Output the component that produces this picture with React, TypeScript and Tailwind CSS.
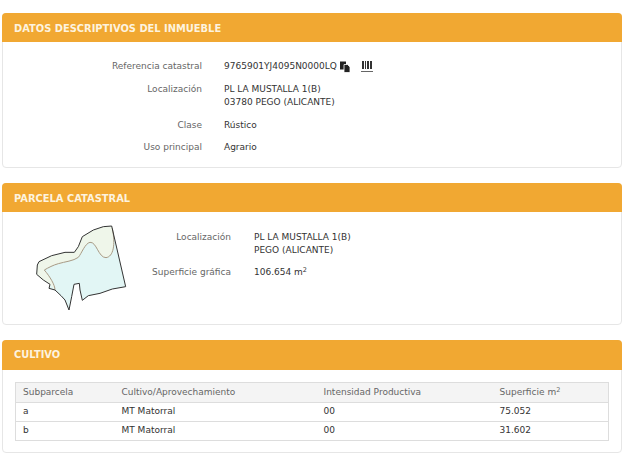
const labelClass = 'text-right text-[#666]';

function Panel({ title, children, className, headerClass }: { title: string; children: React.ReactNode; className: string; headerClass: string }) {
  return (
    <section className={`rounded border border-[#e6e6e6] bg-white ${className}`}>
      <h2 className={`-mx-px -mt-px flex items-center rounded-t bg-[#f1a832] pl-[12px] text-[9.9px] font-bold text-[#fdf3df] ${headerClass}`}>
        {title}
      </h2>
      {children}
    </section>
  );
}

const outline =
  'M260 3 L302 185 L262 192 L225 205 L190 212 L172 226 L165 195 L163 175 L147 178 L140 215 L132 255 L120 225 L108 212 L90 195 L72 190 L75 178 L55 165 L35 148 L37 120 L42 110 L80 92 L120 82 L148 82 L160 65 L172 35 L205 15 L235 5 Z';

function ParcelMap() {
  return (
    <svg viewBox="0 0 330 270" className="h-[90px] w-[110px] shrink-0">
      <path d={outline} fill="#e2f6f5" />
      <path
        d="M260 3 L235 5 L205 15 L172 35 L160 65 L148 82 L120 82 L80 92 L42 110 L37 120 L35 148 L55 165 L75 178 L90 195 C90 180 75 155 58 135 C70 128 85 120 100 116 C120 110 145 108 160 97 C170 85 180 55 195 52 C215 50 220 98 243 98 C265 95 272 60 262 10 Z"
        fill="#eff6ea"
      />
      <path
        d="M262 10 C272 60 265 95 243 98 C220 98 215 50 195 52 C180 55 170 85 160 97 C145 108 120 110 100 116 C85 120 70 128 58 135 C75 155 90 180 90 195"
        fill="none"
        stroke="#a89a85"
        strokeWidth="3"
      />
      <path d={outline} fill="none" stroke="#333" strokeWidth="3" strokeLinejoin="round" />
    </svg>
  );
}

function CopyIcon() {
  return (
    <svg viewBox="0 0 12 12" className="ml-[2px] h-[12px] w-[12px]">
      <path d="M1 0.5h6v8h-6z" fill="#222" />
      <path d="M5 3.5h3.5l2.5 2.5v5.500h-6z" fill="#222" stroke="#fff" strokeWidth="0.8" />
    </svg>
  );
}

function BarcodeIcon() {
  return (
    <svg viewBox="0 0 12 13" className="ml-[10px] h-[13px] w-[12px]">
      <path d="M1 1h2v8h-2zM4 1h1v8h-1zM6 1h2v8h-2zM9 1h2v8h-2z" fill="#333" />
      <path d="M0 11.500h12" stroke="#666" strokeWidth="1" />
    </svg>
  );
}

const rows = [
  ['a', 'MT Matorral', '00', '75.052'],
  ['b', 'MT Matorral', '00', '31.602'],
];

export default function App() {
  return (
    <div className="h-[460px] w-[640px] overflow-hidden bg-white pt-[13px] pl-[2px] font-['DejaVu_Sans',sans-serif] text-[9px] text-[#333]">
      <div className="flex w-[620px] flex-col gap-[15px]">
        <Panel title="DATOS DESCRIPTIVOS DEL INMUEBLE" className="h-[155px]" headerClass="h-[29px] pt-[3px]">
          <div className="grid grid-cols-[199px_1fr] gap-x-[22px] pt-[18px] leading-[13px]">
            <div className={labelClass}>Referencia catastral</div>
            <div className="flex items-center">
              9765901YJ4095N0000LQ
              <CopyIcon />
              <BarcodeIcon />
            </div>
            <div className={`${labelClass} mt-[10px]`}>Localización</div>
            <div className="mt-[10px]">
              PL LA MUSTALLA 1(B)
              <br />
              03780 PEGO (ALICANTE)
            </div>
            <div className={`${labelClass} mt-[10px]`}>Clase</div>
            <div className="mt-[10px]">Rústico</div>
            <div className={`${labelClass} mt-[9px]`}>Uso principal</div>
            <div className="mt-[9px]">Agrario</div>
          </div>
        </Panel>
        <Panel title="PARCELA CATASTRAL" className="h-[142px]" headerClass="h-[29px] pt-[3px]">
          <div className="flex pt-[13px] pl-[22px]">
            <ParcelMap />
            <div className="grid grid-cols-[96px_1fr] content-start gap-x-[23px] pt-[6px] leading-[13px]">
              <div className={labelClass}>Localización</div>
              <div>
                PL LA MUSTALLA 1(B)
                <br />
                PEGO (ALICANTE)
              </div>
              <div className={`${labelClass} mt-[9px]`}>Superficie gráfica</div>
              <div className="mt-[9px]">
                106.654 m<sup className="text-[6.500px]">2</sup>
              </div>
            </div>
          </div>
        </Panel>
        <Panel title="CULTIVO" className="h-[113px]" headerClass="h-[30px] pt-[1px]">
          <div className="px-[12px] pt-[12px]">
            <table className="w-full border border-[#ddd] text-left">
              <thead className="bg-[#f4f4f4] text-[#666]">
                <tr className="h-[20px]">
                  <th className="w-[106px] pl-[7px] font-normal">Subparcela</th>
                  <th className="w-[202px] font-normal">Cultivo/Aprovechamiento</th>
                  <th className="w-[176px] font-normal">Intensidad Productiva</th>
                  <th className="font-normal">
                    Superficie m<sup className="text-[6.500px]">2</sup>
                  </th>
                </tr>
              </thead>
              <tbody>
                {rows.map((row) => (
                  <tr key={row[0]} className="h-[19px] border-t border-[#ddd]">
                    <td className="pl-[7px]">{row[0]}</td>
                    <td>{row[1]}</td>
                    <td>{row[2]}</td>
                    <td>{row[3]}</td>
                  </tr>
                ))}
              </tbody>
            </table>
          </div>
        </Panel>
      </div>
    </div>
  );
}
